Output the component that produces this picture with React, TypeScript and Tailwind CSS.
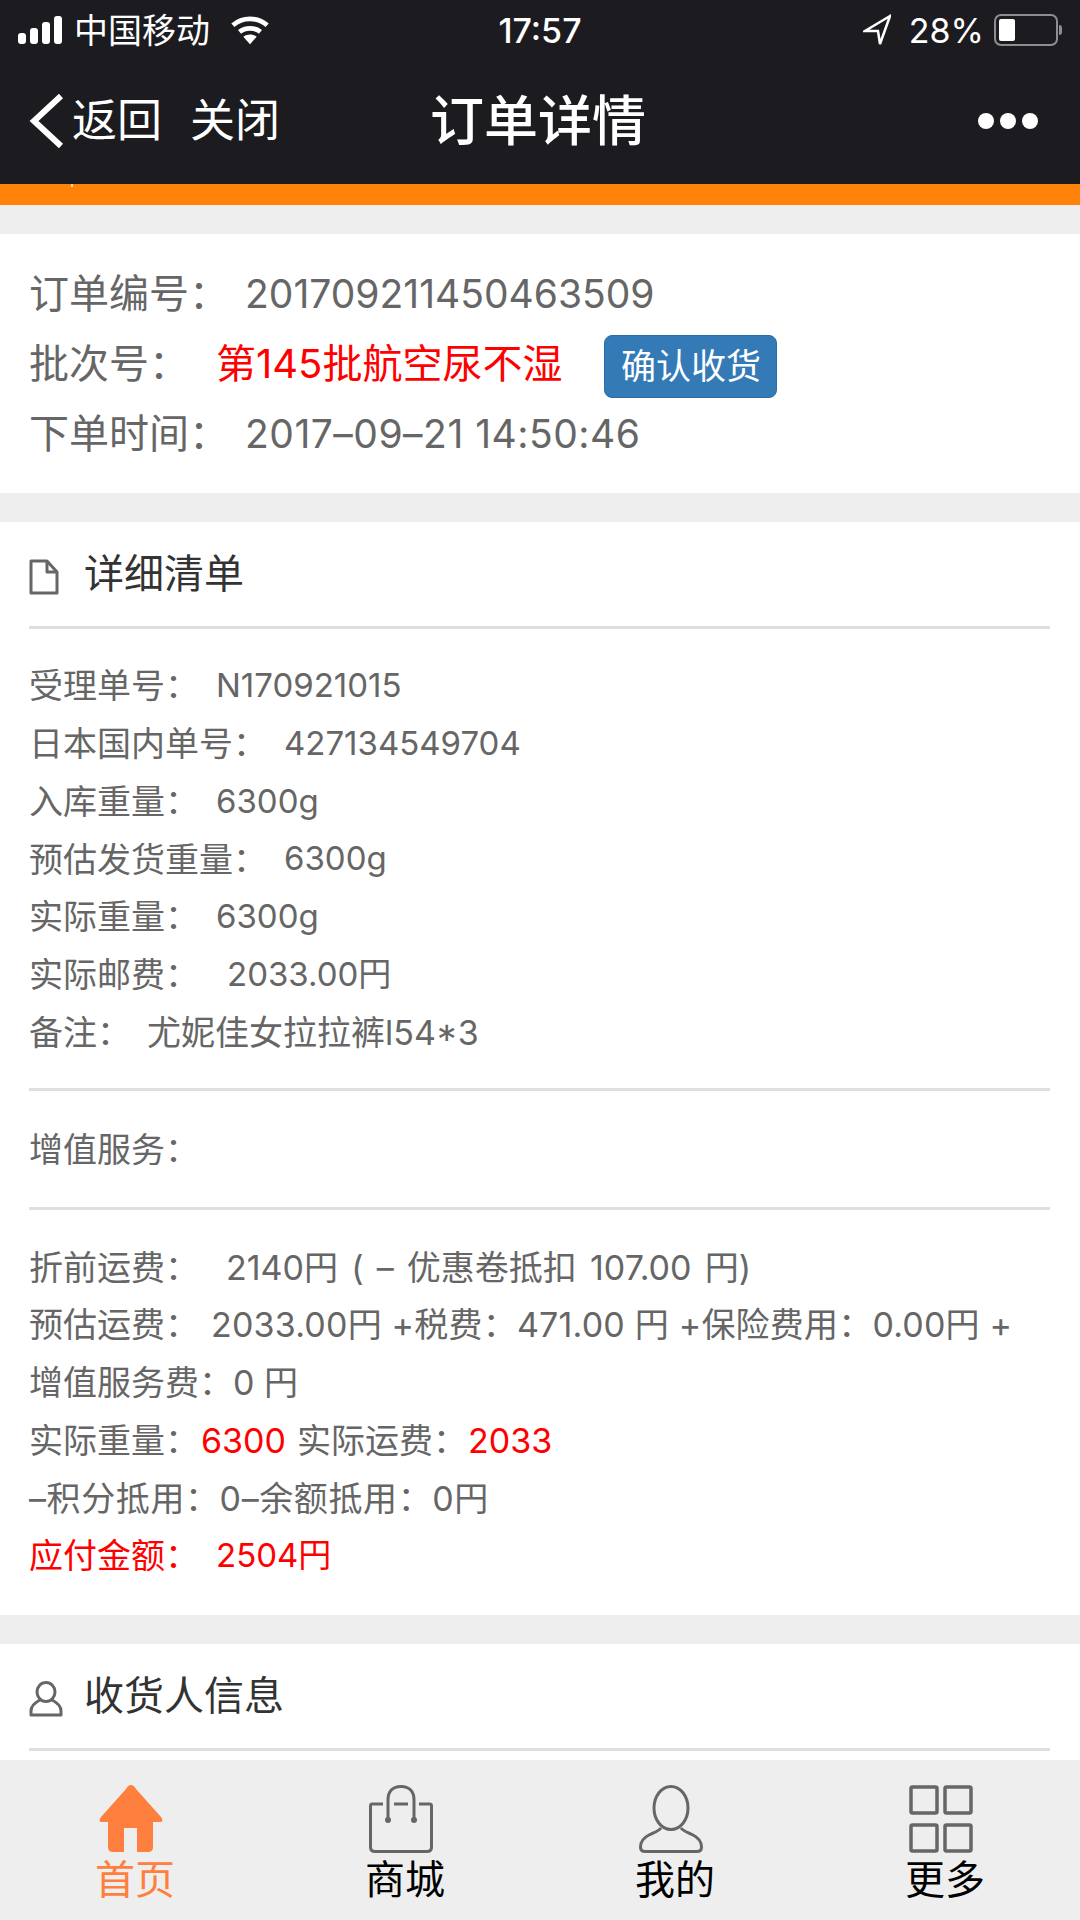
const font = { fontFamily: 'Inter, "Noto Sans CJK SC", sans-serif' }

const SignalIcon = () => (
  <svg width="46" height="28" viewBox="0 0 46 28" fill="#fff">
    <rect x="0" y="17" width="8" height="11" rx="3" />
    <rect x="12" y="12" width="8" height="16" rx="3" />
    <rect x="24" y="6" width="8" height="22" rx="3" />
    <rect x="36" y="0" width="8" height="28" rx="3" />
  </svg>
)

const WifiIcon = () => (
  <svg width="40" height="30" viewBox="0 0 42 30" fill="none" stroke="#fff" strokeWidth="5">
    <path d="M3 10 C13 1 29 1 39 10" />
    <path d="M10 17 C16 12 26 12 32 17" />
    <path d="M21 30 L14 22 C18 19 24 19 28 22 Z" fill="#fff" stroke="none" />
  </svg>
)

const LocationIcon = () => (
  <svg width="28" height="32" viewBox="0 0 28 32" fill="none" stroke="#fff" strokeWidth="2.5">
    <path d="M27 2 L2 17 L15 17 L17 30 Z" />
  </svg>
)

const BatteryIcon = () => (
  <div className="flex items-center">
    <div className="flex h-[32px] w-[64px] items-center rounded-[7px] border-2 border-[#8e8e92] p-[3px]">
      <div className="h-full w-[16px] rounded-[2px] bg-white" />
    </div>
    <div className="ml-[1px] h-[10px] w-[3px] rounded-r-sm bg-[#8e8e92]" />
  </div>
)

const BackIcon = () => (
  <svg width="36" height="56" viewBox="0 0 36 56" fill="none" stroke="#fff" strokeWidth="6">
    <path d="M33 3 L6 28 L33 53" />
  </svg>
)

const DocIcon = () => (
  <svg width="30" height="36" viewBox="0 0 30 36" fill="none" stroke="#666" strokeWidth="3" strokeLinejoin="round">
    <path d="M2 2 H18 L28 13 V34 H2 Z" />
    <path d="M18 2 V13 H28" />
  </svg>
)

const PersonIcon = () => (
  <svg width="34" height="36" viewBox="0 0 34 36" fill="none" stroke="#666" strokeWidth="3" strokeLinejoin="round">
    <ellipse cx="17" cy="11" rx="9" ry="9.5" />
    <path d="M11 19 C5 22 2 25 2 30 V34 H32 V30 C32 25 29 22 23 19" />
  </svg>
)

const HomeIcon = () => (
  <svg width="64" height="68" viewBox="0 0 64 68" fill="#ff7f3f">
    <path d="M32 0 C34 0 35 1 37 4 L62 32 C64 35 64 37 61 37 H54 V62 C54 66 52 67 48 67 H38 V43 H25 V67 H15 C11 67 9 66 9 62 V37 H3 C0 37 0 35 2 32 L27 4 C29 1 30 0 32 0 Z" />
  </svg>
)

const BagIcon = () => (
  <svg width="64" height="68" viewBox="0 0 64 68" fill="none" stroke="#666" strokeWidth="3">
    <path d="M14 19 H3 C2 19 1.5 20 1.5 21 V62 C1.5 65 3 66.5 6 66.5 H58 C61 66.5 62.5 65 62.5 62 V21 C62.5 20 62 19 61 19 H50" />
    <path d="M25 19 H39" />
    <path d="M19 34 V15 C19 6 24 1.5 32 1.5 C40 1.5 45 6 45 15 V34" />
    <circle cx="19" cy="35" r="3" fill="#666" stroke="none" />
    <circle cx="45" cy="35" r="3" fill="#666" stroke="none" />
  </svg>
)

const UserIcon = () => (
  <svg width="64" height="68" viewBox="0 0 64 68" fill="none" stroke="#666" strokeWidth="3">
    <ellipse cx="32" cy="23" rx="17" ry="21.5" />
    <path d="M22 43 C20 46 16 47 10 50 C4 53 1.5 57 1.5 62 C1.5 65 3 66.5 6 66.5 H58 C61 66.5 62.5 65 62.5 62 C62.5 57 60 53 54 50 C48 47 44 46 42 43" />
  </svg>
)

const GridIcon = () => (
  <svg width="64" height="68" viewBox="0 0 64 68" fill="none" stroke="#666" strokeWidth="3.5">
    <rect x="2" y="2" width="26" height="26" rx="1.5" />
    <rect x="36" y="2" width="26" height="26" rx="1.5" />
    <rect x="2" y="40" width="26" height="26" rx="1.5" />
    <rect x="36" y="40" width="26" height="26" rx="1.5" />
  </svg>
)

function Row({ label, value, gap }: { label: string; value: string; gap: string }) {
  return (
    <div className="flex h-[57.75px] items-center whitespace-nowrap">
      <span>{label}</span>
      <span className={gap}>{value}</span>
    </div>
  )
}

function Divider() {
  return <div className="h-[3px] bg-[#dfdfdf]" />
}

function SectionTitle({ icon, title }: { icon: React.ReactNode; title: string }) {
  return (
    <div className="flex h-[104px] items-center gap-[15px] text-[40px] text-[#333]">
      <div className="flex w-[40px] items-center pt-[6px]">{icon}</div>
      <span>{title}</span>
    </div>
  )
}

function TabItem({ icon, label, active }: { icon: React.ReactNode; label: string; active?: boolean }) {
  return (
    <div className="flex w-[270px] flex-col items-center pt-[25px]">
      <div className="mr-[8px] flex h-[68px] items-center">{icon}</div>
      <span className={`mt-[1px] text-[40px] leading-[52px] ${active ? 'text-[#ff7f3f]' : 'text-black'}`}>{label}</span>
    </div>
  )
}

export default function App() {
  return (
    <div className="flex h-[1920px] w-[1080px] flex-col overflow-hidden bg-[#eeeeee]" style={font}>
      <header className="h-[184px] shrink-0 bg-[#1b1b20] text-white">
        <div className="flex h-[58px] items-center justify-between px-[18px] pt-[2px] text-[34px]">
          <div className="flex w-[360px] items-center gap-[10px]">
            <SignalIcon />
            <span>中国移动</span>
            <span className="ml-[10px]"><WifiIcon /></span>
          </div>
          <span className="font-medium">17:57</span>
          <div className="flex w-[360px] items-center justify-end gap-[8px]">
            <LocationIcon />
            <span className="ml-[10px] mr-[2px]">28%</span>
            <BatteryIcon />
          </div>
        </div>
        <div className="flex h-[126px] items-center px-[28px]">
          <div className="flex w-[400px] items-center text-[45px]">
            <BackIcon />
            <span className="ml-[8px]">返回</span>
            <span className="ml-[28px]">关闭</span>
          </div>
          <h1 className="w-[220px] whitespace-nowrap text-center text-[54px] font-medium">订单详情</h1>
          <div className="ml-auto flex gap-[6px] pr-[14px]">
            <div className="h-[16px] w-[16px] rounded-full bg-white" />
            <div className="h-[16px] w-[16px] rounded-full bg-white" />
            <div className="h-[16px] w-[16px] rounded-full bg-white" />
          </div>
        </div>
      </header>
      <div className="relative h-[21px] shrink-0 bg-[#ff830b]">
        <div className="absolute left-[71px] top-0 h-[3px] w-[2px] bg-[#ffd9a8]" />
      </div>

      <main className="flex-1 overflow-hidden pt-[29px] text-[#666]">
        <section className="h-[259px] bg-white pl-[29px] pr-[30px] pt-[25px] text-[40px]">
          <div className="flex h-[70px] items-center whitespace-nowrap">
            <span>订单编号：</span>
            <span className="ml-[16px] text-[39px]">201709211450463509</span>
          </div>
          <div className="flex h-[70px] items-center whitespace-nowrap">
            <span>批次号：</span>
            <span className="ml-[27px] text-[#f00]">第145批航空尿不湿</span>
            <button className="ml-[42px] mt-[4px] h-[63px] w-[173px] rounded-[8px] border border-[#2e6da4] bg-[#337ab7] text-[35px] text-white">确认收货</button>
          </div>
          <div className="flex h-[70px] items-center whitespace-nowrap">
            <span>下单时间：</span>
            <span className="ml-[16px] text-[39px] tracking-[0.5px]">2017–09–21 14:50:46</span>
          </div>
        </section>

        <section className="mt-[29px] h-[1093px] bg-white pl-[29px] pr-[30px] text-[34px]">
          <SectionTitle icon={<DocIcon />} title="详细清单" />
          <Divider />
          <div className="pt-[28px]">
            <Row label="受理单号：" value="N170921015" gap="ml-[17px] text-[33px]" />
            <Row label="日本国内单号：" value="427134549704" gap="ml-[17px] text-[33px]" />
            <Row label="入库重量：" value="6300g" gap="ml-[17px] text-[33px]" />
            <Row label="预估发货重量：" value="6300g" gap="ml-[17px] text-[33px]" />
            <Row label="实际重量：" value="6300g" gap="ml-[17px] text-[33px]" />
            <Row label="实际邮费：" value="2033.00円" gap="ml-[28px] text-[33px]" />
            <Row label="备注：" value="尤妮佳女拉拉裤l54*3" gap="ml-[16px]" />
          </div>
          <div className="mt-[27px]"><Divider /></div>
          <div className="flex h-[116px] items-center">增值服务：</div>
          <Divider />
          <div className="pt-[28px]">
            <Row label="折前运费：" value="2140円 ( – 优惠卷抵扣 107.00 円)" gap="ml-[27px] [word-spacing:3.6px]" />
            <Row label="预估运费：" value="2033.00円 +税费：471.00 円 +保险费用：0.00円 +" gap="ml-[12px] tracking-[0.2px]" />
            <Row label="增值服务费：" value="0 円" gap="" />
            <div className="flex h-[57.75px] items-center whitespace-nowrap">
              <span>实际重量：</span>
              <span className="ml-[2px] text-[#f00]">6300</span>
              <span className="ml-[11px]">实际运费：</span>
              <span className="ml-[1px] text-[#f00]">2033</span>
            </div>
            <div className="flex h-[57.75px] items-center whitespace-nowrap tracking-[0.6px]">–积分抵用：0–余额抵用：0円</div>
            <div className="flex h-[57.75px] items-center whitespace-nowrap text-[#f00]">
              <span>应付金额：</span>
              <span className="ml-[17px] text-[33px]">2504円</span>
            </div>
          </div>
        </section>

        <section className="mt-[29px] bg-white pl-[29px] pr-[30px] text-[39px]">
          <SectionTitle icon={<PersonIcon />} title="收货人信息" />
          <Divider />
          <div className="h-[12px]" />
        </section>
      </main>

      <nav className="flex h-[160px] shrink-0 bg-[#eeeeee]">
        <TabItem icon={<HomeIcon />} label="首页" active />
        <TabItem icon={<BagIcon />} label="商城" />
        <TabItem icon={<UserIcon />} label="我的" />
        <TabItem icon={<GridIcon />} label="更多" />
      </nav>
    </div>
  )
}
